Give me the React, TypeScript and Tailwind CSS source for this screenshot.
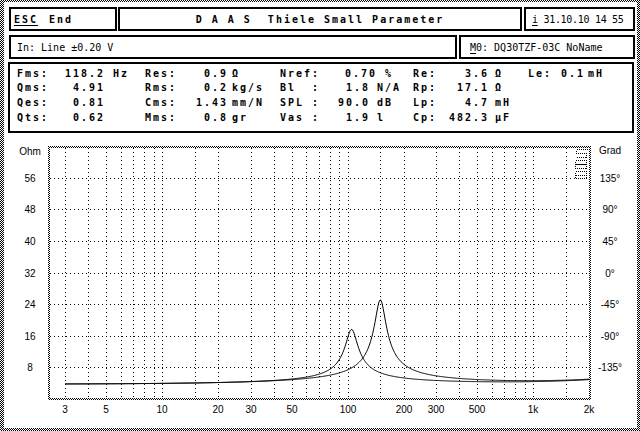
import React from "react";

const mono = "font-['DejaVu_Sans_Mono','Liberation_Mono',monospace]";

// frequency -> x, impedance -> y (page coordinates)
const fx = (f: number) => 65 + 185.6 * Math.log10(f / 3);
const zy = (z: number) => 399 - z * 3.95;

const gridFreqs = [
  3, 4, 5, 6, 7, 8, 9, 10, 15, 20, 30, 40, 50, 60, 70, 80, 90, 100, 150, 200,
  300, 400, 500, 600, 700, 800, 900, 1000, 1500,
];

const xLabels: [number, string][] = [
  [3, "3"],
  [5, "5"],
  [10, "10"],
  [20, "20"],
  [30, "30"],
  [50, "50"],
  [100, "100"],
  [200, "200"],
  [300, "300"],
  [500, "500"],
  [1000, "1k"],
  [2000, "2k"],
];

const ohms = ["56", "48", "40", "32", "24", "16", "8"];
const grads = ["135°", "90°", "45°", "0°", "-45°", "-90°", "-135°"];

const impedance = (f: number, fs: number, zmax: number, q: number) => {
  const re = 3.75;
  const x = f / fs - fs / f;
  return re + (zmax - re) / Math.sqrt(1 + q * q * x * x) + 1.05 * Math.pow(f / 2000, 1.3);
};

const curve = (fs: number, zmax: number, q: number) => {
  const pts: string[] = [];
  for (let i = 0; i <= 700; i++) {
    const f = 3 * Math.pow(2000 / 3, i / 700);
    pts.push(`${fx(f).toFixed(2)},${zy(impedance(f, fs, zmax, q)).toFixed(2)}`);
  }
  return pts.join(" ");
};

const colCls = [
  "w-[48px]",
  "w-[40px] text-right",
  "w-[40px] pl-[8px]",
  "w-[45px]",
  "w-[38px] text-right",
  "w-[52px] pl-[4px]",
  "w-[40px] flex justify-between",
  "w-[50px] text-right",
  "w-[43px] pl-[7px]",
  "w-[25px]",
  "w-[51px] text-right",
  "w-[39px] pl-[6px]",
  "w-[25px]",
  "w-[32px] text-right",
  "pl-[3px]",
];

const params: string[][] = [
  ["Fms:", "118.2", "Hz", "Res:", "0.9", "Ω", "Nref", "0.70", "%", "Re:", "3.6", "Ω", "Le:", "0.1", "mH"],
  ["Qms:", "4.91", "", "Rms:", "0.2", "kg/s", "Bl", "1.8", "N/A", "Rp:", "17.1", "Ω"],
  ["Qes:", "0.81", "", "Cms:", "1.43", "mm/N", "SPL", "90.0", "dB", "Lp:", "4.7", "mH"],
  ["Qts:", "0.62", "", "Mms:", "0.8", "gr", "Vas", "1.9", "l", "Cp:", "482.3", "µF"],
];

function ParamRow({ cells, row }: { cells: string[]; row: number }) {
  return (
    <div className="flex h-[14.67px] items-center">
      {cells.map((c, i) => {
        const cls = row === 0 && i === 8 ? "w-[43px] pl-[15px]" : colCls[i];
        return (
          <div key={i} className={`shrink-0 whitespace-pre ${cls}`}>
            {i === 6 ? (
              <>
                <span>{c}</span>
                <span>:</span>
              </>
            ) : row === 0 && i === 7 ? (
              <span className="-mr-[7px]">{c}</span>
            ) : (
              c
            )}
          </div>
        );
      })}
    </div>
  );
}

function Chart() {
  const top = 146;
  const bottom = 399;
  return (
    <svg width={633} height={295} viewBox="0 0 633 295" className="block">
      <defs>
        <pattern id="chk" width="2" height="2" patternUnits="userSpaceOnUse">
          <rect width="1" height="1" fill="#000" />
          <rect x="1" y="1" width="1" height="1" fill="#000" />
        </pattern>
      </defs>
      <g transform="translate(-4 -133)" fontFamily="Liberation Sans, Arial, sans-serif" fontSize="10">
        {/* grid */}
        <g stroke="#000" strokeWidth="1" strokeDasharray="1 3" shapeRendering="crispEdges">
          {gridFreqs.map((f) => {
            const x = Math.round(fx(f)) + 0.5;
            return <line key={f} x1={x} y1={148} x2={x} y2={398} />;
          })}
          {ohms.map((_, i) => {
            const y = Math.round(zy((7 - i) * 8)) + 0.5;
            return <line key={i} x1={50} y1={y} x2={589} y2={y} />;
          })}
        </g>

        {/* frame */}
        <rect x={48} y={top} width={543} height={2} fill="url(#chk)" />
        <rect x={48} y={bottom - 1} width={543} height={2} fill="url(#chk)" />
        <rect x={48} y={top} width={2} height={254} fill="url(#chk)" />
        <rect x={589} y={top} width={2} height={254} fill="url(#chk)" />

        {/* small legend glyphs */}
        <g fill="none" stroke="#000" strokeWidth="1" strokeDasharray="1 1" shapeRendering="crispEdges">
          <path d="M587.5 149.5 H576.5 V153.5 H586.5 V157.5 H575.5" />
          <rect x={575.5} y={160.5} width={11} height={4} />
          <rect x={575.5} y={164.5} width={11} height={4} />
          <rect x={575.5} y={171.5} width={11} height={7} />
          <line x1={575.5} y1={175.5} x2={586.5} y2={175.5} />
        </g>

        {/* curves */}
        <polyline points={curve(105, 17.6, 6.5)} fill="none" stroke="#000" strokeWidth="1" />
        <polyline points={curve(150, 25.06, 7)} fill="none" stroke="#000" strokeWidth="1" />

        {/* axis labels */}
        <g fill="#000" textAnchor="middle" dominantBaseline="central">
          <text x={30} y={151}>Ohm</text>
          {ohms.map((t, i) => (
            <text key={t} x={30} y={Math.round(zy((7 - i) * 8))}>
              {t}
            </text>
          ))}
          <text x={610} y={150}>Grad</text>
          {grads.map((t, i) => (
            <text key={t} x={610} y={Math.round(zy((7 - i) * 8))}>
              {t}
            </text>
          ))}
          {xLabels.map(([f, t]) => (
            <text key={t} x={Math.round(fx(f))} y={409}>
              {t}
            </text>
          ))}
        </g>
      </g>
    </svg>
  );
}

export default function App() {
  return (
    <div className="h-[431px] w-[640px] bg-[image:repeating-conic-gradient(#000_0%_25%,#fff_0%_50%)] bg-[length:2px_2px] pb-[3px] pl-[4px] pr-[3px] pt-[2px]">
      <div className={`flex h-full flex-col bg-white text-black ${mono}`}>
        <div className="flex flex-col pl-[5px] pr-[2px] pt-[5px]">
          <div className="flex h-[24px]">
            <div className="flex w-[108px] items-center border-2 border-black pl-[3px] text-[10px] font-bold tracking-[2px]">
              <span className="underline underline-offset-2">ESC</span>
              <span className="ml-[11px]">End</span>
            </div>
            <div className="ml-[1px] flex w-[404px] items-center justify-center whitespace-pre border-2 border-black text-[10px] font-bold tracking-[2px]">
              D A A S  Thiele Small Parameter
            </div>
            <div className="ml-[2px] flex w-[111px] items-center whitespace-pre border-2 border-black pl-[6px] text-[10px] tracking-[-0.3px]">
              <span className="underline underline-offset-2">i</span> 31.10.10 14 55
            </div>
          </div>
          <div className="mt-[4px] flex h-[24px]">
            <div className="flex w-[448px] items-center whitespace-pre border-2 border-black pl-[6px] text-[10px]">
              In: Line ±0.20 V
            </div>
            <div className="ml-[2px] flex w-[176px] items-center whitespace-pre border-2 border-black pl-[9px] text-[10px]">
              <span className="underline underline-offset-2">M</span>0: DQ30TZF-03C NoName
            </div>
          </div>
          <div className="-ml-[1px] mt-[3px] flex h-[71px] w-[626px] flex-col border-2 border-black pl-[7px] pt-[2px] text-[10px] font-bold tracking-[2px]">
            {params.map((r, i) => (
              <ParamRow key={i} cells={r} row={i} />
            ))}
          </div>
        </div>
        <Chart />
      </div>
    </div>
  );
}
